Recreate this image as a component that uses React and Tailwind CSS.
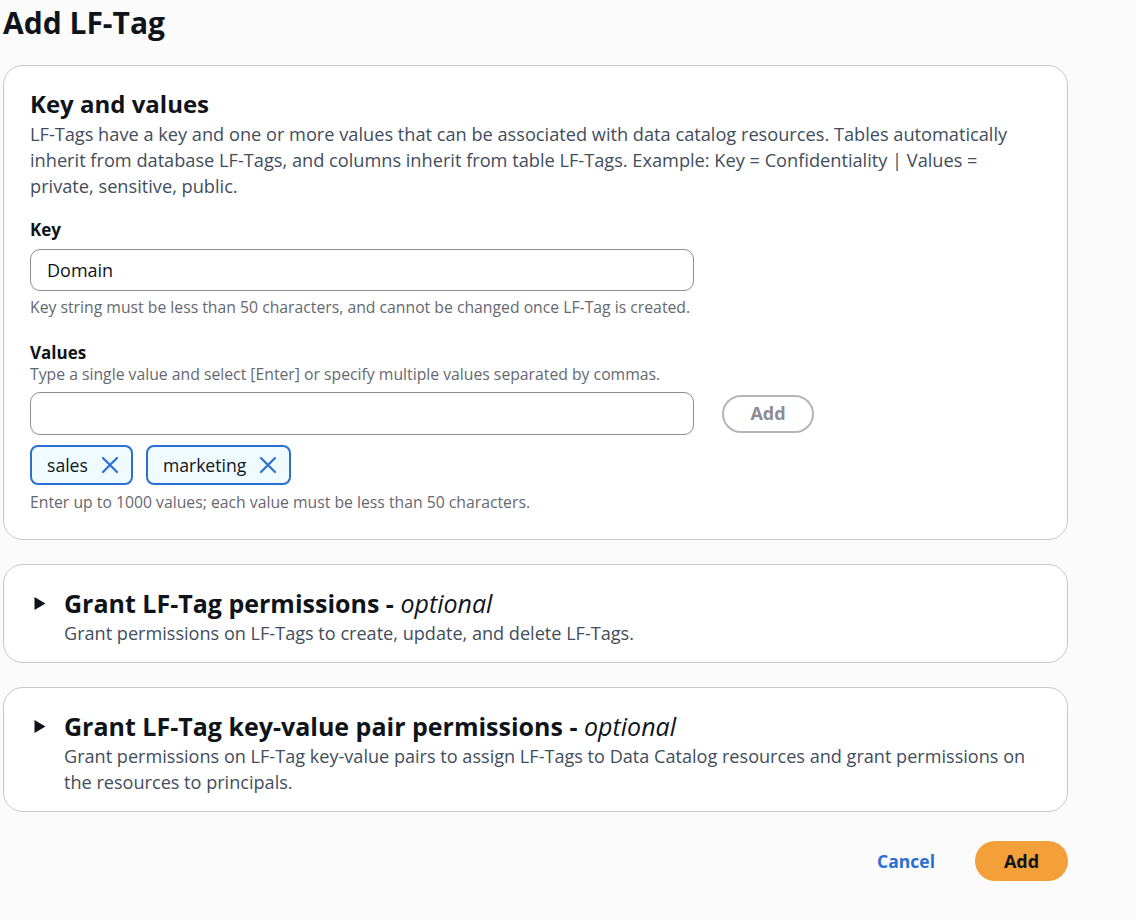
import React, { useState } from 'react';

function Caret() {
  return (
    <svg width="12" height="15" viewBox="0 0 12 15" className="shrink-0">
      <path d="M0.5 1 L11.5 7.5 L0.5 14 Z" fill="#0f141a" />
    </svg>
  );
}

function XIcon() {
  return (
    <svg width="18" height="18" viewBox="0 0 18 18">
      <path d="M2 2 L16 16 M16 2 L2 16" stroke="#2a6fd3" strokeWidth="2.2" strokeLinecap="round" fill="none" />
    </svg>
  );
}

function Tag({ label }) {
  return (
    <div className="flex items-center gap-[13px] h-[40px] pl-[15px] pr-[12px] rounded-[8px] border-2 border-[#2a6fd3] bg-[#f0fbff] text-[17.6px] text-[#0f141a]">
      <span>{label}</span>
      <XIcon />
    </div>
  );
}

function Expandable({ title, desc }) {
  return (
    <div className="rounded-[20px] border border-[#c6c6cd] bg-white pl-[30px] pr-8 pt-[21px] pb-[16px]">
      <div className="flex items-center gap-[18px]">
        <Caret />
        <h2 className="text-[25px] leading-[34px] font-bold text-[#0f141a]">
          {title} - <span className="italic font-normal">optional</span>
        </h2>
      </div>
      <p className="pl-[30px] text-[18.1px] leading-[26px] text-[#414d5c]">{desc}</p>
    </div>
  );
}

export default function App() {
  const [tags] = useState(['sales', 'marketing']);

  return (
    <div className="min-h-[920px] w-[1136px] bg-[#fbfbfb] pl-[3px] pr-[68px] pt-[3px]" style={{ fontFamily: '"Open Sans", "Noto Sans", sans-serif' }}>
      <h1 className="text-[30px] leading-[40px] font-bold text-[#0f141a]">Add LF-Tag</h1>

      <div className="mt-[22px] rounded-[20px] border border-[#c6c6cd] bg-white pl-[26px] pr-8 pt-[21px] pb-[27px]">
        <h2 className="text-[24px] leading-[34px] font-bold text-[#0f141a]">Key and values</h2>
        <p className="text-[18.2px] leading-[26px] text-[#414d5c]">
          LF-Tags have a key and one or more values that can be associated with data catalog resources. Tables automatically inherit from database LF-Tags, and columns inherit from table LF-Tags. Example: Key = Confidentiality | Values = private, sensitive, public.
        </p>

        <div className="mt-[19px]">
          <label className="block text-[17px] leading-[24px] font-bold text-[#0f141a]">Key</label>
          <div className="mt-[7px] w-[664px] h-[42px] rounded-[10px] border border-[#8c8c94] flex items-center px-4 text-[18px] text-[#0f141a]">
            Domain
          </div>
          <p className="mt-[6px] text-[15.75px] leading-[20px] text-[#656871]">
            Key string must be less than 50 characters, and cannot be changed once LF-Tag is created.
          </p>
        </div>

        <div className="mt-[25px]">
          <label className="block text-[17px] leading-[22px] font-bold text-[#0f141a]">Values</label>
          <p className="text-[15.75px] leading-[20px] text-[#656871]">
            Type a single value and select [Enter] or specify multiple values separated by commas.
          </p>
          <div className="mt-[8px] flex items-center gap-[28px]">
            <div className="w-[664px] h-[43px] rounded-[10px] border border-[#8c8c94]" />
            <button className="h-[38px] w-[92px] rounded-full border-2 border-[#b4b4bb] text-[18px] font-bold text-[#8c8c94] bg-white">
              Add
            </button>
          </div>
          <div className="mt-[10px] flex gap-[13px]">
            {tags.map((t) => (
              <Tag key={t} label={t} />
            ))}
          </div>
          <p className="mt-[7px] text-[15.75px] leading-[20px] text-[#656871]">
            Enter up to 1000 values; each value must be less than 50 characters.
          </p>
        </div>
      </div>

      <div className="mt-[24px] flex flex-col gap-[24px]">
        <Expandable
          title="Grant LF-Tag permissions"
          desc="Grant permissions on LF-Tags to create, update, and delete LF-Tags."
        />
        <Expandable
          title="Grant LF-Tag key-value pair permissions"
          desc="Grant permissions on LF-Tag key-value pairs to assign LF-Tags to Data Catalog resources and grant permissions on the resources to principals."
        />
      </div>

      <div className="mt-[29px] flex items-center justify-end gap-[40px]">
        <button className="text-[17.5px] font-bold text-[#2a6fd3]">Cancel</button>
        <button className="h-[40px] w-[93px] rounded-full bg-[#f3a03a] text-[18px] font-bold text-[#0f141a]">Add</button>
      </div>
    </div>
  );
}
